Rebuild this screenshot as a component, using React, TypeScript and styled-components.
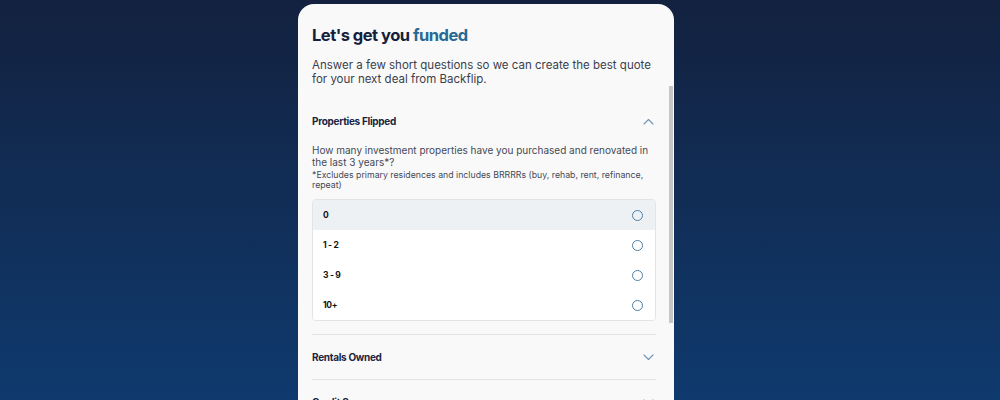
import React from 'react'
import styled, {createGlobalStyle} from 'styled-components'

const GlobalStyle = createGlobalStyle`
    html, body{
        margin: 0;
        padding: 0;
        height: 100%;
    }

    body{
        background: linear-gradient(180deg, #13213f 0%, #0f3a6e 100%);
        font-family: Inter, "Noto Sans", sans-serif;
        overflow: hidden;
    }
`

const Page = styled.div`
    display: flex;
    justify-content: center;
    padding: 4px 28px 0 0;
    height: 100vh;
    box-sizing: border-box;
`

const Card = styled.div`
    flex: none;
    width: 376px;
    height: 430px;
    background: #f9f9f9;
    border-radius: 16px;
    display: flex;
    flex-direction: column;
    overflow: hidden;
`

const Header = styled.div`
    flex: none;
    padding: 20px 18px 0 14px;
`

const Title = styled.h1`
    margin: 0;
    font-size: 16.5px;
    font-weight: 700;
    color: #14213d;
    letter-spacing: -0.5px;
    line-height: 22px;

    span{
        color: #256a94;
    }
`

const Subtitle = styled.p`
    margin: 12px 0 0;
    font-size: 11.5px;
    line-height: 14px;
    color: #3a3f4d;
`

const Scroller = styled.div`
    position: relative;
    flex: 1;
    overflow: hidden;
    padding: 13px 18px 0 14px;
`

const Thumb = styled.div`
    position: absolute;
    top: 0;
    right: 1px;
    width: 4px;
    height: 237px;
    background: #c6c6c6;
`

const Section = styled.div<{$last?: boolean}>`
    border-bottom: ${({$last}) => $last ? 'none' : '1px solid #e4e4e4'};
`

const SectionHead = styled.div`
    display: flex;
    align-items: center;
    justify-content: space-between;
    height: 44px;
    padding-right: 2px;
`

const SectionTitle = styled.h3`
    margin: 0;
    font-size: 10px;
    letter-spacing: -0.3px;
    font-weight: 700;
    color: #1a2540;
`

const Body = styled.div`
    padding: 1px 0 13px;
`

const Question = styled.p`
    margin: 0;
    font-size: 10px;
    line-height: 12px;
    color: #454957;
`

const Note = styled.p`
    margin: 3px 0 0;
    font-size: 8.75px;
    line-height: 9.5px;
    color: #454957;
`

const Options = styled.div`
    margin-top: 9px;
    border: 1px solid #e2e4e7;
    border-radius: 4px;
    background: #ffffff;
    overflow: hidden;
`

const Option = styled.label<{$active?: boolean}>`
    display: flex;
    align-items: center;
    justify-content: space-between;
    height: 30px;
    padding: 0 12px 0 10px;
    background: ${({$active}) => $active ? '#eef1f4' : '#ffffff'};
    font-size: 8.5px;
    letter-spacing: -0.3px;
    font-weight: 700;
    color: #111;
`

const Radio = styled.span`
    width: 9px;
    height: 9px;
    border: 1.2px solid #4f7fa4;
    border-radius: 50%;
`

const Chevron = ({up}: {up?: boolean}) => (
    <svg width="11" height="7" viewBox="0 0 11 7" fill="none">
        <path
            d={up ? 'M1 6 L5.5 1.5 L10 6' : 'M1 1 L5.5 5.5 L10 1'}
            stroke="#6e95b6"
            strokeWidth="1.1"
            strokeLinecap="round"
            strokeLinejoin="round"
        />
    </svg>
)

const options = ['0', '1 - 2', '3 - 9', '10+']
const closed = ['Rentals Owned', 'Credit Score', 'Loan Amount']

const App = () => {
    return (
        <>
            <GlobalStyle />
            <Page>
                <Card>
                    <Header>
                        <Title>Let's get you <span>funded</span></Title>
                        <Subtitle>
                            Answer a few short questions so we can create the best quote for your next deal from Backflip.
                        </Subtitle>
                    </Header>
                    <Scroller>
                        <Thumb />
                        <Section>
                            <SectionHead>
                                <SectionTitle>Properties Flipped</SectionTitle>
                                <Chevron up />
                            </SectionHead>
                            <Body>
                                <Question>
                                    How many investment properties have you purchased and renovated in the last 3 years*?
                                </Question>
                                <Note>
                                    *Excludes primary residences and includes BRRRRs (buy, rehab, rent, refinance, repeat)
                                </Note>
                                <Options>
                                    {options.map((o, i) => (
                                        <Option key={o} $active={i === 0}>
                                            {o}
                                            <Radio />
                                        </Option>
                                    ))}
                                </Options>
                            </Body>
                        </Section>
                        {closed.map((c, i) => (
                            <Section key={c} $last={i === closed.length - 1}>
                                <SectionHead>
                                    <SectionTitle>{c}</SectionTitle>
                                    <Chevron />
                                </SectionHead>
                            </Section>
                        ))}
                    </Scroller>
                </Card>
            </Page>
        </>
    )
}

export default App
